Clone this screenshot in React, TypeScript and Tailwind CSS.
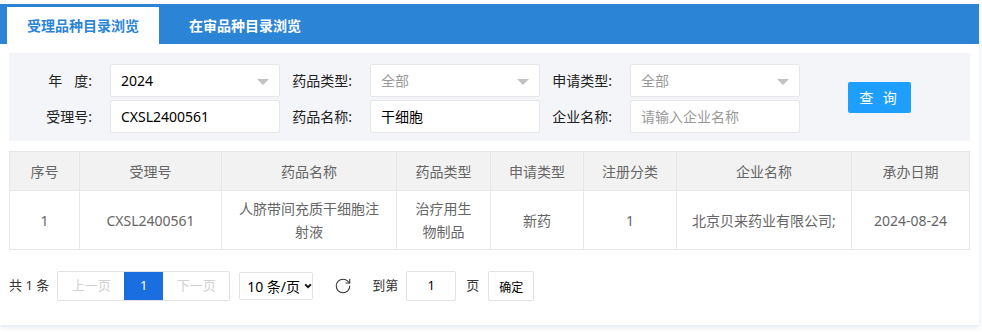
import { RotateCw } from "lucide-react";
import type { ReactNode } from "react";

const font = { fontFamily: '"Noto Sans", "Noto Sans CJK SC", sans-serif' };

function Caret() {
  return (
    <span className="absolute right-[10px] top-[14px] h-0 w-0 border-x-[6px] border-t-[6px] border-x-transparent border-t-[#c2c2c2]" />
  );
}

function Field({
  label,
  value,
  muted,
  select,
}: {
  label: ReactNode;
  value: string;
  muted?: boolean;
  select?: boolean;
}) {
  return (
    <div className="flex items-center">
      <label className="w-[90px] pr-[18px] text-right text-[14px] whitespace-pre text-[#222]">{label}</label>
      <div
        className={`relative flex h-[33px] w-[170px] items-center rounded-[2px] border border-[#e6e6e6] bg-white pl-[10px] text-[14px] ${
          muted ? "text-[#999]" : "text-black"
        }`}
      >
        {value}
        {select && <Caret />}
      </div>
    </div>
  );
}

const cols = [
  { t: "序号", w: "w-[70px]" },
  { t: "受理号", w: "w-[142px]" },
  { t: "药品名称", w: "w-[175px]" },
  { t: "药品类型", w: "w-[94px]" },
  { t: "申请类型", w: "w-[93px]" },
  { t: "注册分类", w: "w-[93px]" },
  { t: "企业名称", w: "w-[175px]" },
  { t: "承办日期", w: "w-[118px]" },
];

const row = ["1", "CXSL2400561", "人脐带间充质干细胞注射液", "治疗用生物制品", "新药", "1", "北京贝来药业有限公司;", "2024-08-24"];

export default function App() {
  return (
    <div className="h-[332px] w-[982px] overflow-hidden bg-white pt-1" style={font}>
      <div className="h-[321px] w-[979px] bg-white shadow-[0_2px_5px_rgba(70,110,180,0.18)]">
        {/* tabs */}
        <div className="flex h-10 items-end bg-[#2b84d6] pl-[7px] text-[14px] font-bold">
          <div className="flex h-[37px] items-center bg-white px-5 text-[#2b84d6]">受理品种目录浏览</div>
          <div className="ml-[10px] flex h-[37px] items-center px-5 text-white">在审品种目录浏览</div>
        </div>

        {/* filters */}
        <div className="mx-[9px] mt-[9px] flex h-[88px] items-center bg-[#f4f5f8] pl-[11px]">
          <div className="flex flex-col gap-[3px] pt-[2px]">
            <div className="flex">
              <Field
                label={
                  <>
                    年<span className="inline-block w-[12px]" />度:
                  </>
                }
                value="2024"
                select
              />
              <Field label="药品类型:" value="全部" muted select />
              <Field label="申请类型:" value="全部" muted select />
            </div>
            <div className="flex">
              <Field label="受理号:" value="CXSL2400561" />
              <Field label="药品名称:" value="干细胞" />
              <Field label="企业名称:" value="请输入企业名称" muted />
            </div>
          </div>
          <button className="ml-[48px] h-[31px] w-[63px] rounded-[2px] bg-[#1e9fff] text-[14px] tracking-[3px] text-white">
            查 询
          </button>
        </div>

        {/* table */}
        <table className="mx-[9px] mt-[10px] w-[960px] table-fixed border-collapse text-center text-[14px] text-[#666]">
          <thead>
            <tr className="h-[39px] bg-[#f2f2f2]">
              {cols.map((c) => (
                <th key={c.t} className={`${c.w} border border-[#e6e6e6] font-normal`}>
                  {c.t}
                </th>
              ))}
            </tr>
          </thead>
          <tbody>
            <tr className="h-[59px]">
              {row.map((v, i) => (
                <td key={i} className="border border-[#e6e6e6] px-[15px] leading-[23px]">
                  {v}
                </td>
              ))}
            </tr>
          </tbody>
        </table>

        {/* pager */}
        <div className="mt-[21px] flex items-center whitespace-nowrap pl-[9px] text-[13px] text-[#333]">
          <span>共 1 条</span>
          <div className="ml-[8px] flex h-[30px] shrink-0 overflow-hidden rounded-[2px] border border-[#e2e2e2]">
            <span className="flex w-[66px] items-center justify-center text-[#d2d2d2]">上一页</span>
            <span className="flex w-[39px] items-center justify-center bg-[#1a6ee0] text-white">1</span>
            <span className="flex w-[66px] items-center justify-center text-[#d2d2d2]">下一页</span>
          </div>
          <div className="ml-[9px] flex h-[28px] w-[74px] shrink-0 items-center gap-[4px] rounded-[2px] border border-[#e2e2e2] pl-[7px] text-[14px] text-black">
            <span>10 条/页</span>
            <svg width="10" height="8" viewBox="0 0 10 8">
              <path d="M1.5 2l3.5 3.5L8.5 2" fill="none" stroke="#111" strokeWidth="2.4" />
            </svg>
          </div>
          <RotateCw className="ml-[21px] shrink-0 text-[#333]" size={18} strokeWidth={1.4} />
          <span className="ml-[20px]">到第</span>
          <div className="ml-[8px] flex h-[30px] w-[50px] shrink-0 items-center justify-center rounded-[2px] border border-[#e2e2e2] text-black">
            1
          </div>
          <span className="ml-[10px]">页</span>
          <div className="ml-[9px] flex h-[30px] w-[46px] shrink-0 items-center justify-center rounded-[2px] border border-[#e2e2e2] pt-[3px] text-[12px] text-black">
            确定
          </div>
        </div>
      </div>
    </div>
  );
}
